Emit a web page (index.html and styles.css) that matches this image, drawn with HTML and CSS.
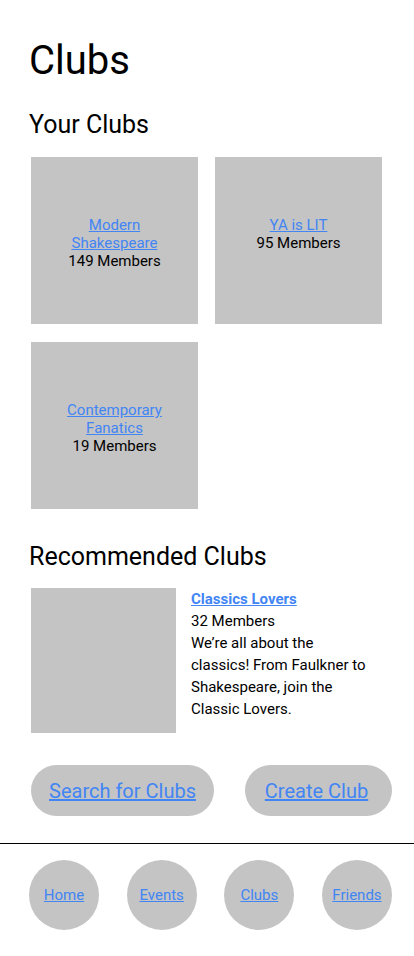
FILE: index.html
```html
<!DOCTYPE html>
<html lang="en">
<head>
<meta charset="utf-8">
<title>Clubs</title>
<link rel="stylesheet" href="styles.css">
</head>
<body>
<main class="page">
  <h1 class="title">Clubs</h1>
  <h2 class="section-title section-your">Your Clubs</h2>
  <div class="club-grid">
    <div class="tile">
      <a href="#" class="link">Modern Shakespeare</a>
      <span>149 Members</span>
    </div>
    <div class="tile">
      <a href="#" class="link">YA is LIT</a>
      <span>95 Members</span>
    </div>
    <div class="tile">
      <a href="#" class="link">Contemporary Fanatics</a>
      <span>19 Members</span>
    </div>
  </div>

  <h2 class="section-title section-rec">Recommended Clubs</h2>
  <div class="rec">
    <div class="rec-img"></div>
    <div class="rec-text">
      <a href="#" class="link rec-name">Classics Lovers</a>
      <span>32 Members</span>
      <p class="rec-desc">We’re all about the classics! From Faulkner to Shakespeare, join the Classic Lovers.</p>
    </div>
  </div>

  <div class="actions">
    <a href="#" class="btn btn-search">Search for Clubs</a>
    <a href="#" class="btn btn-create">Create Club</a>
  </div>
</main>
<nav class="bottom-nav">
  <a href="#" class="nav-item">Home</a>
  <a href="#" class="nav-item">Events</a>
  <a href="#" class="nav-item">Clubs</a>
  <a href="#" class="nav-item">Friends</a>
</nav>
</body>
</html>
```
FILE: styles.css
```css
* { box-sizing: border-box; }
html, body { margin: 0; padding: 0; background: #fff; }
body {
  font-family: Roboto, "Liberation Sans", sans-serif;
  color: #000;
  width: 414px;
}
.page {
  padding: 37px 22px 0 31px;
}
.title {
  margin: 0 0 0 -2px;
  font-size: 40px;
  font-weight: 400;
  line-height: normal;
}
.section-title {
  margin: 0 0 0 -2px;
  font-size: 25px;
  font-weight: 400;
  line-height: normal;
}
.section-your { margin-top: 26px; }
.section-rec { margin-top: 33px; }
.club-grid {
  margin-top: 18px;
  display: grid;
  grid-template-columns: 167px 167px;
  column-gap: 17px;
  row-gap: 18px;
}
.tile {
  height: 167px;
  background: #c4c4c4;
  padding: 59px 30px 0;
  display: flex;
  flex-direction: column;
  align-items: center;
  text-align: center;
  font-size: 15px;
  line-height: 18px;
}
.link {
  color: #4285f4;
  text-decoration: underline;
}
.rec {
  margin-top: 17px;
  display: flex;
  gap: 15px;
}
.rec-img {
  width: 145px;
  height: 145px;
  background: #c4c4c4;
  flex: none;
}
.rec-text {
  width: 182px;
  display: flex;
  flex-direction: column;
  align-items: flex-start;
  font-size: 15px;
  line-height: 22px;
}
.rec-name {
  font-weight: 700;
  font-size: 15px;
}
.rec-desc { margin: 0; }
.actions {
  margin-top: 32px;
  display: flex;
  justify-content: space-between;
}
.btn {
  height: 51px;
  border-radius: 26px;
  background: #c4c4c4;
  color: #4285f4;
  text-decoration: underline;
  font-size: 20px;
  display: flex;
  align-items: center;
  justify-content: center;
}
.btn-search { width: 183px; }
.btn-create { width: 147px; padding-right: 4px; }
.bottom-nav {
  margin-top: 27px;
  border-top: 1px solid #000;
  padding: 16px 22px 26px 29px;
  display: flex;
  justify-content: space-between;
}
.nav-item {
  width: 70px;
  height: 70px;
  border-radius: 50%;
  background: #c4c4c4;
  color: #4285f4;
  text-decoration: underline;
  font-size: 15px;
  display: flex;
  align-items: center;
  justify-content: center;
}
```
